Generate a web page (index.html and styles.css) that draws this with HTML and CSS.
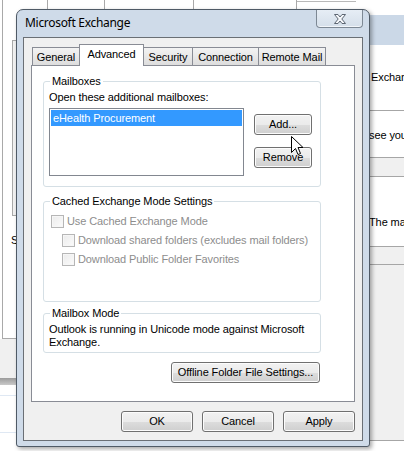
FILE: index.html
```html
<!DOCTYPE html>
<html>
<head>
<meta charset="utf-8">
<link rel="stylesheet" href="styles.css">
</head>
<body>
<div class="desk">
  <div class="bgwin bg-top">
    <div class="top-cell c0"></div>
    <div class="top-cell c1"></div>
    <div class="top-cell c2"></div>
    <div class="top-cell c3"></div>
    <div class="top-cell c4"></div>
    <div class="top-cell c5"></div>
  </div>
  <div class="bgwin bg-left">
    <div class="lw-pane">
      <div class="lw-scroll"></div>
      <div class="lw-s">S</div>
    </div>
    <div class="lw-gray"></div>
    <div class="lw-bar"></div>
    <div class="lw-row lw-r1"></div>
    <div class="lw-row lw-r2"></div>
  </div>
  <div class="bgwin bg-right">
    <div class="r-top"></div>
    <div class="r-band"></div>
    <div class="r-sec r-s1"><span class="r-text r-ex">Exchar</span></div>
    <div class="r-sec r-s2"><span class="r-text">see you</span></div>
    <div class="r-sec r-s3 r-light"></div>
    <div class="r-sec r-s4"><span class="r-text">The ma</span></div>
    <div class="r-sec r-s5 r-light"></div>
    <div class="r-sec r-s6 r-light"></div>
  </div>

  <div class="dialog">
    <div class="titlebar">
      <span class="title">Microsoft Exchange</span>
      <div class="close">
        <svg width="14" height="12" viewBox="0 0 14 12"><path d="M1.5 1.5 L5 1.5 L7 4 L9 1.5 L12.5 1.5 L8.8 6 L12.5 10.5 L9 10.5 L7 8 L5 10.5 L1.5 10.5 L5.2 6 Z" fill="#f6f8fb" stroke="#5d6672" stroke-width="1" stroke-linejoin="round"/></svg>
      </div>
    </div>
    <div class="client">
      <div class="tabs">
        <div class="tab t-general">General</div>
        <div class="tab sel t-adv">Advanced</div>
        <div class="tab t-sec">Security</div>
        <div class="tab t-conn">Connection</div>
        <div class="tab t-rm">Remote Mail</div>
      </div>
      <div class="panel">
        <fieldset class="group g-mail">
          <legend>Mailboxes</legend>
          <div class="line">Open these additional mailboxes:</div>
          <div class="mail-row">
            <div class="listbox"><div class="item sel">eHealth Procurement</div></div>
            <div class="btncol">
              <div class="btn b-add">Add...</div>
              <div class="btn b-rem">Remove</div>
            </div>
          </div>
        </fieldset>
        <fieldset class="group g-cache">
          <legend>Cached Exchange Mode Settings</legend>
          <div class="chk lvl0"><span class="box"></span><span class="dis">Use Cached Exchange Mode</span></div>
          <div class="chk lvl1"><span class="box"></span><span class="dis">Download shared folders (excludes mail folders)</span></div>
          <div class="chk lvl1"><span class="box"></span><span class="dis">Download Public Folder Favorites</span></div>
        </fieldset>
        <fieldset class="group g-mode">
          <legend>Mailbox Mode</legend>
          <p class="mode-text">Outlook is running in Unicode mode against Microsoft Exchange.</p>
        </fieldset>
        <div class="offline-row"><div class="btn b-off">Offline Folder File Settings...</div></div>
      </div>
      <div class="footer">
        <div class="btn b-foot">OK</div>
        <div class="btn b-foot">Cancel</div>
        <div class="btn b-foot">Apply</div>
      </div>
    </div>
  </div>

  <svg class="cursor" width="13" height="21" viewBox="0 0 13 21"><path d="M0.5 0.5 L0.5 16.5 L4.5 12.5 L7 18.5 L9.5 17.5 L7 11.5 L12 11.5 Z" fill="#fff" stroke="#000" stroke-width="1" stroke-linejoin="miter"/></svg>
</div>
</body>
</html>
```

FILE: styles.css
```css
* { box-sizing: border-box; }
html, body { margin: 0; padding: 0; }
body {
  width: 404px;
  height: 451px;
  overflow: hidden;
  background: #ffffff;
  font-family: "Liberation Sans", Arial, sans-serif;
  font-size: 11px;
  line-height: 13px;
  letter-spacing: -0.1px;
  color: #000;
}
.desk { position: relative; width: 404px; height: 451px; overflow: hidden; }

/* background windows */
.bgwin { position: absolute; }
.bg-top { left: 0; top: 0; width: 404px; height: 12px; display: flex; }
.top-cell { height: 12px; border-right: 1px solid #a9a9a9; }
.c0 { width: 3px; }
.c1 { width: 45px; }
.c2 { width: 57px; }
.c3 { width: 89px; }
.c4 { width: 103px; }
.c5 { flex: 1; border-right: none; border-top: 1px solid #b9b9b9; margin-top: 1px; }

.bg-left { left: 0; top: 0; width: 24px; height: 451px; display: flex; flex-direction: column; }
.lw-pane {
  margin-left: 2px;
  height: 339px;
  border-left: 1px solid #a9a9a9;
  border-bottom: 1px solid #a9a9a9;
  background: #fff;
  padding: 40px 0 0 9px;
}
.lw-scroll { width: 10px; height: 176px; border-left: 1px solid #a9a9a9; border-top: 1px solid #a9a9a9; border-bottom: 1px solid #a9a9a9; background: #f2f2f2; }
.lw-s { margin: 18px 0 0 -1px; line-height: 13px; }
.lw-gray { height: 39px; background: #f0f0f0; }
.lw-bar { height: 7px; background: linear-gradient(#9b9b9b, #c9c9c9); }
.lw-row { border-bottom: 1px solid #dfe8f3; }
.lw-r1 { height: 11px; }
.lw-r2 { height: 37px; }

.bg-right { left: 356px; top: 0; width: 48px; height: 451px; display: flex; flex-direction: column; }
.r-top { height: 15px; background: #fff; }
.r-band { height: 30px; background: #cbd8e7; }
.r-sec { border-bottom: 1px solid #a6a6a6; background: #fff; white-space: nowrap; overflow: hidden; display: flex; align-items: center; }
.r-light { background: #f0f0f0; }
.r-text { padding-left: 13px; }
.r-ex { padding-left: 15px; }
.r-s1 { height: 66px; }
.r-s2 { height: 47px; padding-top: 2px; }
.r-s3 { height: 19px; }
.r-s4 { height: 70px; padding-top: 22px; }
.r-s5 { height: 18px; }
.r-s6 { height: 176px; }

/* dialog */
.dialog {
  position: absolute;
  left: 16px;
  top: 9px;
  width: 354px;
  height: 438px;
  background: #cfdbe9;
  border: 1px solid #4f5a66;
  border-radius: 7px 7px 3px 3px;
  box-shadow: 2px 2px 4px rgba(0,0,0,0.35);
  padding: 0 6px 5px 6px;
  display: flex;
  flex-direction: column;
}
.titlebar { height: 27px; display: flex; align-items: flex-start; }
.title {
  font-family: "Noto Sans", "Open Sans", sans-serif;
  font-size: 12px;
  letter-spacing: -0.3px;
  line-height: 16px;
  padding: 5px 0 0 2px;
  color: #000;
}
.close {
  margin-left: auto;
  width: 47px;
  height: 18px;
  border: 1px solid #7d8894;
  border-top: none;
  border-radius: 0 0 4px 4px;
  background: linear-gradient(#e6edf5, #d5dfea);
  box-shadow: inset 0 -1px 0 #f2f6fa;
  display: flex;
  align-items: center;
  justify-content: center;
}
.client {
  flex: 1;
  background: #f0f0f0;
  border: 1px solid #6a6f75;
  padding: 6px 7px 0 7px;
  display: flex;
  flex-direction: column;
}

/* tabs */
.tabs { display: flex; align-items: flex-end; height: 21px; padding-left: 1px; position: relative; z-index: 1; }
.tab {
  height: 18px;
  border: 1px solid #898c95;
  border-bottom: none;
  margin-right: -1px;
  background: linear-gradient(#f3f3f3, #e8e8e8 50%, #dddddd);
  padding: 3px 0 0 0;
  text-align: center;
}
.tab.sel {
  background: #fff;
  margin-bottom: -1px;
  padding-top: 3px;
  position: relative;
  z-index: 2;
  height: 22px;
}
.t-general { width: 48px; }
.t-adv { width: 65px; }
.t-sec { width: 50px; }
.t-conn { width: 67px; }
.t-rm { width: 68px; }

.panel {
  height: 337px;
  background: #fff;
  border: 1px solid #898c95;
  padding: 9px 0 0 11px;
  display: flex;
  flex-direction: column;
}
.group {
  margin: 0;
  width: 278px;
  border: 1px solid #d5dfe5;
  border-radius: 3px;
  padding: 0 0 0 5px;
}
.group legend {
  padding: 0 2px;
  margin-left: 1px;
  line-height: 13px;
}
.g-mail { padding-top: 3px; padding-bottom: 10px; }
.line { height: 13px; }
.mail-row { display: flex; margin-top: 4px; }
.listbox {
  width: 195px;
  height: 68px;
  border: 1px solid #828790;
  background: #fff;
  padding: 1px 0 0 1px;
}
.item { height: 16px; padding: 2px 0 0 2px; }
.item.sel { background: #3399ff; color: #fff; margin-right: 1px; }
.btncol { margin-left: 10px; padding-top: 6px; display: flex; flex-direction: column; gap: 12px; }

.btn {
  height: 21px;
  border: 1px solid #707070;
  border-radius: 3px;
  background: linear-gradient(#f2f2f2 0%, #ebebeb 50%, #dddddd 51%, #cfcfcf 100%);
  box-shadow: inset 0 0 0 1px #fcfcfc;
  text-align: center;
  padding-top: 3px;
}
.b-add, .b-rem { width: 58px; }

.g-cache { margin-top: 8px; height: 107px; padding-top: 4px; }
.chk { display: flex; align-items: center; height: 19px; }
.chk.lvl1 { padding-left: 13px; }
.chk.lvl0 { padding-left: 2px; }
.box {
  width: 13px; height: 13px;
  border: 1px solid #b6b6b6;
  background: linear-gradient(135deg, #ebebeb, #fbfbfb);
  box-shadow: inset 0 0 0 1px #f6f6f6;
  margin-right: 3px;
}
.dis { color: #8d8d8d; }

.g-mode { margin-top: 5px; padding-top: 3px; padding-bottom: 3px; }
.mode-text { margin: 0; line-height: 13px; width: 270px; }

.offline-row { width: 277px; display: flex; justify-content: flex-end; margin-top: 9px; }
.b-off { width: 149px; }

.footer { display: flex; justify-content: flex-end; gap: 9px; padding-top: 9px; }
.b-foot { width: 72px; }

.cursor { position: absolute; left: 291px; top: 136px; }
```
